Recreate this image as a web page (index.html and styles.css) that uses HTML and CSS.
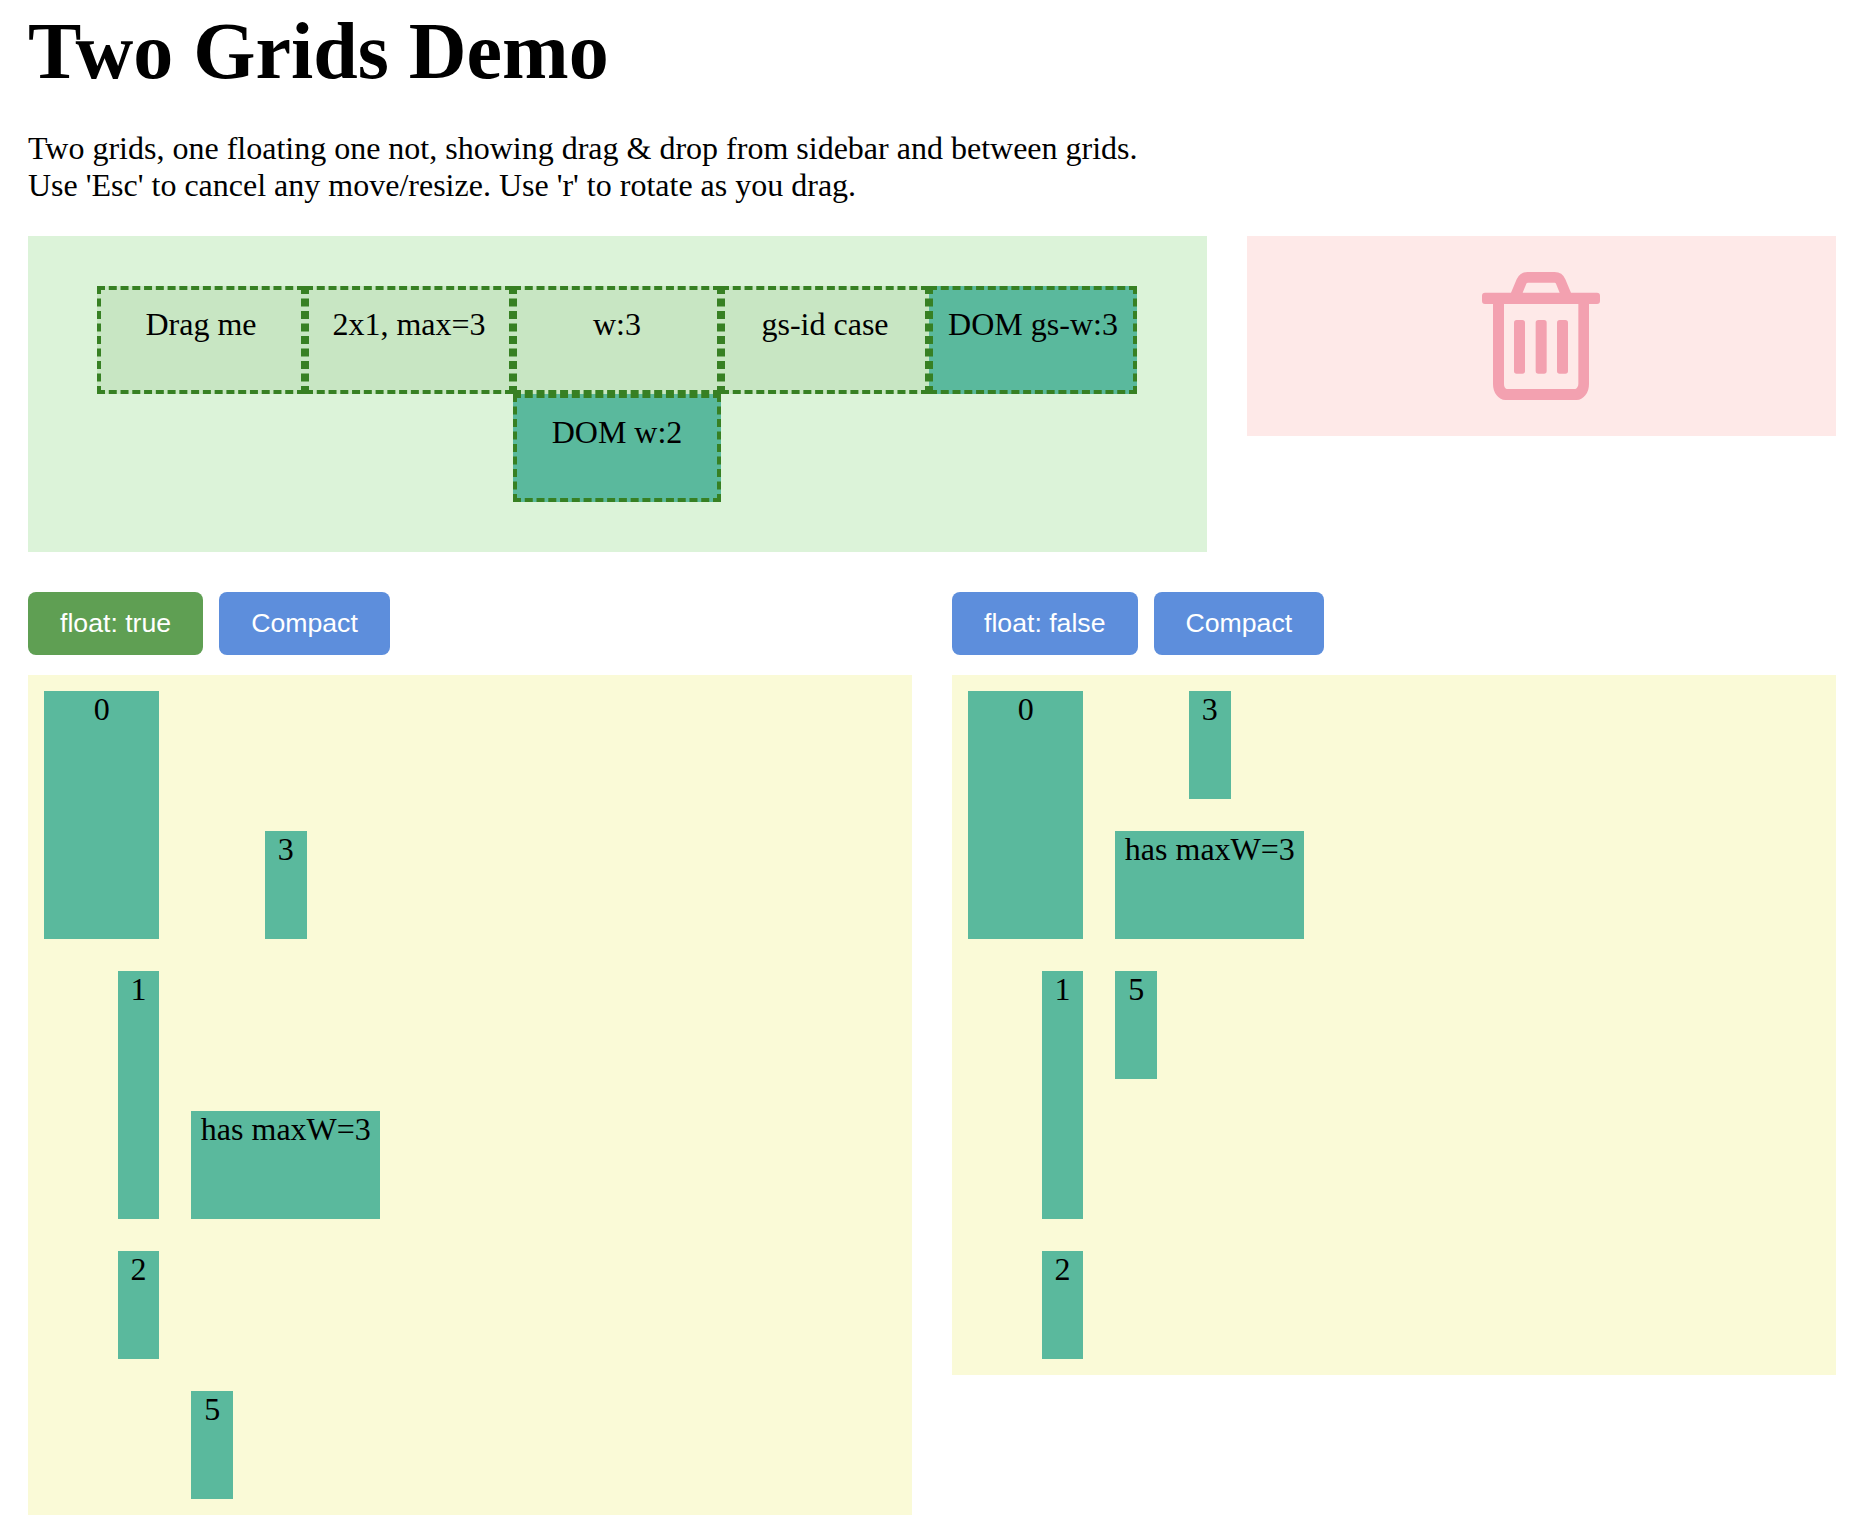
FILE: index.html
```html
<!DOCTYPE html>
<html lang="en">
<head>
<meta charset="utf-8">
<title>Two grids demo</title>
<link rel="stylesheet" href="styles.css">
</head>
<body>
<main class="page">
  <h1 class="title">Two Grids Demo</h1>
  <p class="intro">Two grids, one floating one not, showing drag &amp; drop from sidebar and between grids.<br>Use 'Esc' to cancel any move/resize. Use 'r' to rotate as you drag.</p>
  <section class="top">
    <div class="sidebar">
      <div class="source">Drag me</div>
      <div class="source">2x1, max=3</div>
      <div class="source">w:3</div>
      <div class="source">gs-id case</div>
      <div class="source source-dom">DOM gs-w:3</div>
      <div class="source source-dom">DOM w:2</div>
    </div>
    <div class="trash">
      <svg class="trash-icon" viewBox="0 0 354 384" aria-label="Trash">
        <path fill-rule="evenodd" d="M9 62H87L104 22Q114 0 136 0H218Q241 0 250 22L267 62H345Q354 62 354 71V87Q354 96 345 96H321V336Q321 357 310 370Q299 384 284 384H70Q55 384 44 370Q33 357 33 336V96H9Q0 96 0 87V71Q0 62 9 62ZM122 62H233L222 35Q221 32 218 32H138Q134 32 133 35ZM66 96V336Q66 342 68 346Q71 351 74 351H280Q283 351 286 346Q289 342 289 336V96Z"/>
        <rect x="96" y="144" width="33" height="161" rx="8"/>
        <rect x="161" y="144" width="33" height="161" rx="8"/>
        <rect x="225" y="144" width="33" height="161" rx="8"/>
      </svg>
    </div>
  </section>
  <section class="grids">
    <div class="column">
      <div class="actions">
        <button class="btn btn-on">float: true</button>
        <button class="btn">Compact</button>
      </div>
      <div class="board rows-6">
        <div class="item c1 w2 r1 h2">0</div>
        <div class="item c4 r2">3</div>
        <div class="item c2 r3 h2">1</div>
        <div class="item c3 w3 r4">has maxW=3</div>
        <div class="item c2 r5">2</div>
        <div class="item c3 r6">5</div>
      </div>
    </div>
    <div class="column">
      <div class="actions">
        <button class="btn">float: false</button>
        <button class="btn">Compact</button>
      </div>
      <div class="board rows-5">
        <div class="item c1 w2 r1 h2">0</div>
        <div class="item c4 r1">3</div>
        <div class="item c3 w3 r2">has maxW=3</div>
        <div class="item c2 r3 h2">1</div>
        <div class="item c3 r3">5</div>
        <div class="item c2 r5">2</div>
      </div>
    </div>
  </section>
</main>
</body>
</html>
```
FILE: styles.css
```css
* { box-sizing: border-box; }

body {
  margin: 0;
  background: #fff;
  color: #000;
  font: 32px/37px "Liberation Serif", "Times New Roman", serif;
}

.page { padding: 3px 30px 0 28px; }

.title {
  margin: 0 0 31px;
  font-size: 80px;
  line-height: 96px;
  font-weight: 700;
}

.intro { margin: 0 0 32px; }

.top {
  display: flex;
  align-items: flex-start;
  gap: 40px;
}

.sidebar {
  display: flex;
  flex-wrap: wrap;
  justify-content: center;
  width: 1179px;
  height: 316px;
  padding: 50px 1px 50px 0;
  background: #dcf3d9;
}

.source {
  width: 208px;
  height: 108px;
  padding-top: 16px;
  border: 4px dashed #378023;
  background: #c8e6c3;
  text-align: center;
  white-space: nowrap;
}

.source-dom { background: #5ab99d; }

.trash {
  flex: 1;
  display: flex;
  justify-content: center;
  height: 200px;
  padding: 36px 1px 0 0;
  background: #fee9e8;
}

.trash-icon {
  width: 118px;
  height: 128px;
  fill: #f3a1b0;
}

.grids {
  display: flex;
  align-items: flex-start;
  gap: 40px;
  margin-top: 40px;
}

.column { flex: 1; }

.actions {
  display: flex;
  gap: 16px;
  margin-bottom: 20px;
}

.btn {
  height: 63px;
  padding: 0 32px;
  border: 0;
  border-radius: 8px;
  background: #5d8edc;
  color: #fff;
  font: 26.667px/31px "Liberation Sans", Arial, sans-serif;
}

.btn-on { background: #5f9f53; }

.board {
  display: grid;
  grid-template-columns: repeat(12, 1fr);
  background: #fafad7;
}

.rows-6 { grid-template-rows: repeat(6, 140px); }
.rows-5 { grid-template-rows: repeat(5, 140px); }

.item {
  --w: 1;
  --h: 1;
  grid-column: var(--x) / span var(--w);
  grid-row: var(--y) / span var(--h);
  min-width: 0;
  margin: 16px;
  background: #5ab99d;
  text-align: center;
  white-space: nowrap;
}

.c1 { --x: 1; }
.c2 { --x: 2; }
.c3 { --x: 3; }
.c4 { --x: 4; }
.w2 { --w: 2; }
.w3 { --w: 3; }
.r1 { --y: 1; }
.r2 { --y: 2; }
.r3 { --y: 3; }
.r4 { --y: 4; }
.r5 { --y: 5; }
.r6 { --y: 6; }
.h2 { --h: 2; }
```
